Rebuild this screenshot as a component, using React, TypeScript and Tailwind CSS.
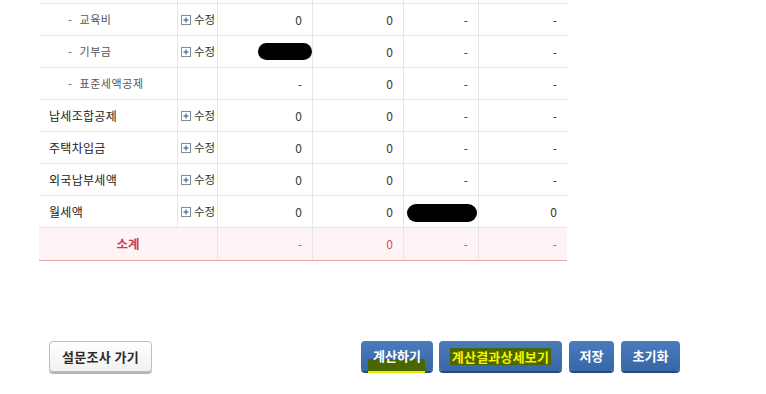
import React from "react";

type Row = {
  label: string;
  sub?: boolean;
  edit?: boolean;
  vals: (string | "blob")[];
};

const rows: Row[] = [
  { label: "교육비", sub: true, edit: true, vals: ["0", "0", "-", "-"] },
  { label: "기부금", sub: true, edit: true, vals: ["blob", "0", "-", "-"] },
  { label: "표준세액공제", sub: true, edit: false, vals: ["-", "0", "-", "-"] },
  { label: "납세조합공제", edit: true, vals: ["0", "0", "-", "-"] },
  { label: "주택차입금", edit: true, vals: ["0", "0", "-", "-"] },
  { label: "외국납부세액", edit: true, vals: ["0", "0", "-", "-"] },
  { label: "월세액", edit: true, vals: ["0", "0", "blob", "0"] },
];

const grid = "grid grid-cols-[139px_40px_95px_91px_75px_88px]";

function PlusIcon() {
  return (
    <svg width="10" height="10" viewBox="0 0 10 10" className="shrink-0">
      <rect x="0.5" y="0.5" width="9" height="9" fill="#fff" stroke="#8a8a8a" />
      <path d="M5 2.5v5M2.5 5h5" stroke="#3f7fd4" strokeWidth="1.4" />
    </svg>
  );
}

function Blob({ w }: { w: string }) {
  return <div className={`${w} rounded-[9px] bg-black`} />;
}

export default function App() {
  return (
    <div
      className="w-[766px] h-[394px] bg-white text-[12px] text-[#333]"
      style={{ fontFamily: '"Noto Sans CJK KR", "Noto Sans", sans-serif' }}
    >
      <div className="ml-[39px] w-[528px]">
        {/* tail of previous row */}
        <div className={`${grid} h-[4px] border-b border-[#e6e6e6]`}>
          <div className="border-r border-[#e6e6e6]" />
          <div className="border-r border-[#e6e6e6]" />
          <div className="border-r border-[#e6e6e6]" />
          <div className="border-r border-[#e6e6e6]" />
          <div className="border-r border-[#e6e6e6]" />
          <div />
        </div>

        {rows.map((r, i) => (
          <div key={i} className={`${grid} h-[32px] border-b border-[#e6e6e6]`}>
            {r.sub ? (
              <div className="flex items-center gap-[7px] pl-[29px] border-r border-[#e6e6e6] text-[#555] text-[11px] tracking-[0.6px]">
                <span>-</span>
                <span>{r.label}</span>
              </div>
            ) : (
              <div className="flex items-center pl-[10px] border-r border-[#e6e6e6] text-[#222] tracking-[0.3px]">
                {r.label}
              </div>
            )}
            <div className="flex items-center gap-[3px] pl-[3px] border-r border-[#e6e6e6] text-[11.5px] text-[#333]">
              {r.edit && (
                <>
                  <PlusIcon />
                  <span>수정</span>
                </>
              )}
            </div>
            {r.vals.map((v, j) => (
              <div
                key={j}
                className={`flex items-center justify-end ${
                  j < 3 ? "border-r border-[#e6e6e6]" : ""
                } ${v === "blob" ? (j === 0 ? "pr-0" : "pr-[1px] pt-[2px]") : "pr-[10px]"}`}
              >
                {v === "blob" ? (
                  <Blob w={j === 0 ? "w-[54px] h-[17px]" : "w-[70px] h-[18px]"} />
                ) : (
                  v
                )}
              </div>
            ))}
          </div>
        ))}

        {/* subtotal */}
        <div className="grid grid-cols-[179px_95px_91px_75px_88px] h-[33px] bg-[#fff4f5] border-b border-[#f0a4a4] text-[#d2485a]">
          <div className="flex items-center justify-center font-bold text-[12.5px] border-r border-[#e6e6e6] text-[#d03a55]">
            소계
          </div>
          <div className="flex items-center justify-end pr-[10px] border-r border-[#e6e6e6]">-</div>
          <div className="flex items-center justify-end pr-[10px] border-r border-[#e6e6e6]">0</div>
          <div className="flex items-center justify-end pr-[10px] border-r border-[#e6e6e6]">-</div>
          <div className="flex items-center justify-end pr-[10px]">-</div>
        </div>
      </div>

      {/* buttons */}
      <div className="mt-[80px] ml-[49px] w-[631px] flex justify-between items-start">
        <button className="h-[31px] w-[103px] rounded-[4px] border border-[#bdbdbd] bg-gradient-to-b from-white to-[#f1f1f1] shadow-[0_2px_0_#b5b5b5] font-bold text-[13px] text-[#2b2b2b] tracking-[0.3px]">
          설문조사 가기
        </button>
        <div className="flex gap-[6px]">
          <button className="relative h-[30px] w-[72px] rounded-[4px] bg-gradient-to-b from-[#4a7cbc] to-[#3766a6] shadow-[0_2px_0_#27497a] font-bold text-[13px] text-white">
            <div className="absolute left-[7px] top-[18px] w-[57px] h-[14px] bg-[#4b6500] border-b-2 border-[#e8f000]" />
            <span className="relative">계산하기</span>
          </button>
          <button className="h-[30px] w-[123px] rounded-[4px] bg-gradient-to-b from-[#4a7cbc] to-[#3766a6] shadow-[0_2px_0_#27497a] font-bold text-[13px] flex items-center justify-center">
            <span className="bg-[#4b6500] text-[#f4f400] px-[2px] leading-[17px] tracking-[0.2px]">계산결과상세보기</span>
          </button>
          <button className="ml-[1px] h-[30px] w-[45px] rounded-[4px] bg-gradient-to-b from-[#4a7cbc] to-[#3766a6] shadow-[0_2px_0_#27497a] font-bold text-[13px] text-white">
            저장
          </button>
          <button className="ml-[1px] h-[30px] w-[59px] rounded-[4px] bg-gradient-to-b from-[#4a7cbc] to-[#3766a6] shadow-[0_2px_0_#27497a] font-bold text-[13px] text-white">
            초기화
          </button>
        </div>
      </div>
    </div>
  );
}
